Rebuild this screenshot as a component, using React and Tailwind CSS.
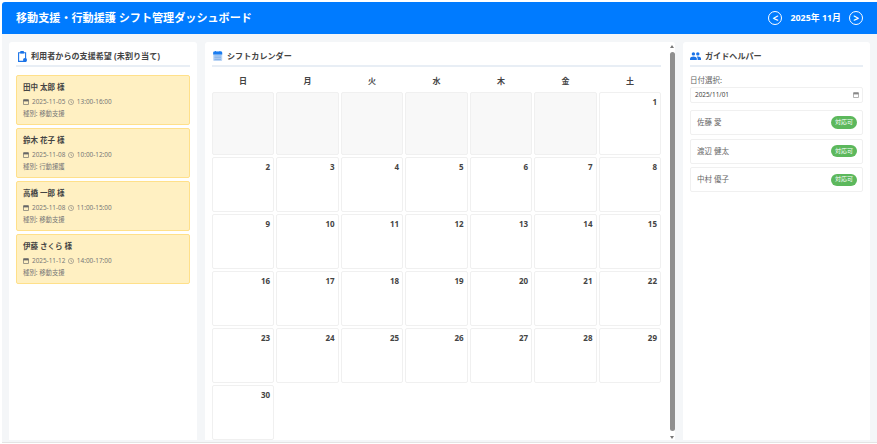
import React from "react";

const requests = [
  { name: "田中 太郎 様", date: "2025-11-05", time: "13:00-16:00", type: "移動支援" },
  { name: "鈴木 花子 様", date: "2025-11-08", time: "10:00-12:00", type: "行動援護" },
  { name: "高橋 一郎 様", date: "2025-11-08", time: "11:00-15:00", type: "移動支援" },
  { name: "伊藤 さくら 様", date: "2025-11-12", time: "14:00-17:00", type: "移動支援" },
];

const helpers = ["佐藤 愛", "渡辺 健太", "中村 優子"];
const weekdays = ["日", "月", "火", "水", "木", "金", "土"];
const blanks = [0, 1, 2, 3, 4, 5];
const days = Array.from({ length: 30 }, (_, i) => i + 1);

const SmallCalendar = ({ color = "#666" }) => (
  <svg width="6" height="6" viewBox="0 0 6 6" className="shrink-0">
    <rect x="0.4" y="0.6" width="5.2" height="5" rx="0.6" fill="none" stroke={color} strokeWidth="0.7" />
    <rect x="0.4" y="0.6" width="5.2" height="1.8" fill={color} />
  </svg>
);

const SmallClock = () => (
  <svg width="6" height="6" viewBox="0 0 6 6" className="shrink-0">
    <circle cx="3" cy="3" r="2.6" fill="none" stroke="#777" strokeWidth="0.55" />
    <path d="M3 1.5v1.7l1.2 0.6" fill="none" stroke="#777" strokeWidth="0.55" />
  </svg>
);

const ClipboardIcon = () => (
  <svg width="11" height="11" viewBox="0 0 11 11">
    <path d="M2.6 1.8h7v8.6h-7z" fill="none" stroke="#1a73e8" strokeWidth="1.1" />
    <rect x="4.2" y="0" width="3.8" height="2.6" rx="0.7" fill="#1a73e8" />
    <circle cx="9" cy="9" r="2" fill="#1a73e8" />
  </svg>
);

const CalendarIcon = () => (
  <svg width="11" height="10" viewBox="0 0 11 10">
    <rect x="1.2" y="0.6" width="9" height="9.4" rx="1.1" fill="#b9d4f5" />
    <path d="M1.2 1.7A1.1 1.1 0 0 1 2.3 0.6h6.8a1.1 1.1 0 0 1 1.1 1.1V3.6H1.2z" fill="#1a7cf0" />
    <rect x="3" y="0" width="0.9" height="1.6" fill="#1a7cf0" />
    <rect x="7.5" y="0" width="0.9" height="1.6" fill="#1a7cf0" />
    <path d="M2.4 5h6.6M2.4 6.7h6.6M2.4 8.4h6.6" stroke="#6ea4e4" strokeWidth="0.7" />
  </svg>
);

const PeopleIcon = () => (
  <svg width="11" height="8" viewBox="0 0 11 8">
    <circle cx="3.4" cy="1.9" r="1.7" fill="#1a73e8" />
    <circle cx="7.8" cy="1.9" r="1.7" fill="#1a73e8" />
    <path d="M0 8V6.6C0 5.3 1.8 4.6 3.4 4.6S6.8 5.3 6.8 6.6V8z" fill="#1a73e8" />
    <path d="M7.6 8V6.4C7.6 5.7 7.3 5.1 6.8 4.7 9 4.3 11 5.2 11 6.6V8z" fill="#1a73e8" />
  </svg>
);

const NavButton = ({ label }) => (
  <div className="flex h-[14px] w-[14px] items-center justify-center rounded-full border border-white text-[10px] leading-none font-bold text-white">
    {label}
  </div>
);

const PanelTitle = ({ icon, children }) => (
  <div className="flex h-[23px] items-center gap-[4px] border-b-2 border-[#e8eef5] pt-[3px] text-[8.1px] font-bold text-[#444]">
    {icon}
    <span>{children}</span>
  </div>
);

export default function App() {
  return (
    <div
      className="flex h-screen w-full flex-col overflow-hidden bg-white pt-[2px] pl-[2px]"
      style={{ fontFamily: '"Noto Sans", "Noto Sans CJK JP", sans-serif' }}
    >
      <header className="flex h-[32px] shrink-0 items-center justify-between rounded-tl-[3px] bg-[#007bff] pr-[14px] pl-[14px] text-white">
        <h1 className="text-[11.1px] font-bold">移動支援・行動援護 シフト管理ダッシュボード</h1>
        <div className="flex items-center gap-[8px]">
          <NavButton label="<" />
          <span className="text-[8.9px] font-bold">2025年 11月</span>
          <NavButton label=">" />
        </div>
      </header>

      <main className="flex min-h-0 flex-1 gap-[8px] bg-[#f4f6f8] pt-[8px] pr-[7px] pb-[2px] pl-[7px]">
        <section className="w-[188px] shrink-0 rounded-t-[3px] bg-white px-[7px] pt-[2px]">
          <PanelTitle icon={<ClipboardIcon />}>利用者からの支援希望 (未割り当て)</PanelTitle>
          <div className="mt-[8px] flex flex-col gap-[3px]">
            {requests.map((r) => (
              <div key={r.name} className="h-[50px] rounded-[2px] border border-[#ffe08a] bg-[#fff0c2] px-[6px] pt-[6px]">
                <p className="text-[7.5px] leading-[11px] font-bold text-[#444]">{r.name}</p>
                <div className="mt-[4px] flex items-center text-[6.4px] leading-[10px] text-[#777]">
                  <SmallCalendar />
                  <span className="mr-[2.5px] ml-[3px]">{r.date}</span>
                  <SmallClock />
                  <span className="ml-[3px]">{r.time}</span>
                </div>
                <p className="mt-[2px] text-[6.4px] leading-[10px] text-[#777]">種別: {r.type}</p>
              </div>
            ))}
          </div>
        </section>

        <section className="relative w-[470px] shrink-0 rounded-t-[3px] bg-white pt-[2px] pr-[14px] pl-[7px]">
          <PanelTitle icon={<CalendarIcon />}>シフトカレンダー</PanelTitle>
          <div className="mt-[5px] grid grid-cols-7 gap-x-[2.4px] gap-y-[2px] [grid-template-rows:18px_63px_repeat(5,55px)]">
            {weekdays.map((w) => (
              <div key={w} className="flex items-center justify-center text-[8px] font-bold text-[#444]">
                {w}
              </div>
            ))}
            {blanks.map((b) => (
              <div key={b} className="rounded-[2px] border border-[#f0f0f0] bg-[#f8f8f8]" />
            ))}
            {days.map((d) => (
              <div
                key={d}
                className="rounded-[2px] border border-[#f0f0f0] bg-white pt-[3px] pr-[3px] text-right text-[8px] leading-[12px] font-bold text-[#444]"
              >
                {d}
              </div>
            ))}
          </div>
          <div className="absolute top-[3px] right-0 bottom-0 flex w-[6px] flex-col items-center">
            <div className="h-0 w-0 border-x-[2.5px] border-b-[3px] border-x-transparent border-b-[#777]" />
            <div className="mt-[4px] w-[5px] flex-1 rounded-full bg-[#8f8f8f]" />
            <div className="mt-[5px] mb-[1px] h-0 w-0 border-x-[2.5px] border-t-[3px] border-x-transparent border-t-[#777]" />
          </div>
        </section>

        <section className="min-w-0 flex-1 rounded-t-[3px] bg-white px-[7px] pt-[2px]">
          <PanelTitle icon={<PeopleIcon />}>ガイドヘルパー</PanelTitle>
          <p className="mt-[8px] text-[7.5px] leading-[11px] text-[#666]">日付選択:</p>
          <div className="mt-[1px] flex h-[16px] items-center justify-between rounded-[2px] border border-[#f0f0f0] pr-[3px] pl-[4px] text-[6.4px] text-[#444]">
            <span>2025/11/01</span>
            <SmallCalendar color="#888" />
          </div>
          <div className="mt-[7px] flex flex-col gap-[3.7px]">
            {helpers.map((h) => (
              <div key={h} className="flex h-[25px] items-center justify-between rounded-[2px] border border-[#f0f0f0] pr-[5px] pl-[6px]">
                <span className="text-[7.5px] text-[#666]">{h}</span>
                <span className="flex h-[12.5px] items-center rounded-full bg-[#5cb85c] px-[4px] text-[6px] text-white">対応可</span>
              </div>
            ))}
          </div>
        </section>
      </main>
      <div className="h-px shrink-0 bg-[#e4e4e4]" />
      <div className="h-px shrink-0 bg-white" />
    </div>
  );
}
